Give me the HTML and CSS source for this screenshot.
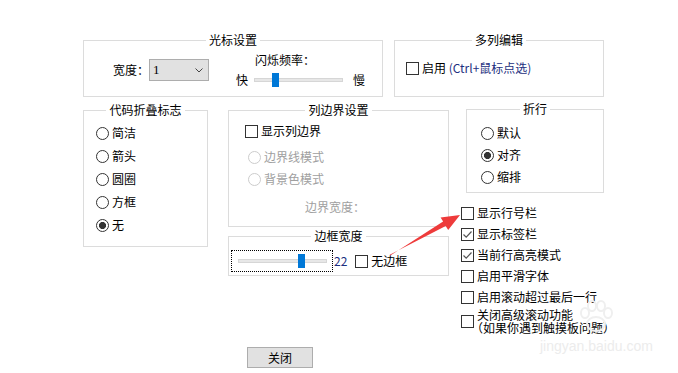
FILE: index.html
```html
<html lang="zh-CN">
<head>
  <meta charset="UTF-8" />
  <title>设置</title>
  <link rel="stylesheet" href="styles.css">
</head>
<body>
  <div class="dialog">
    <div class="row-top">
      <fieldset class="group cursor-group">
        <legend class="group-title">光标设置</legend>
        <div class="cursor-body">
          <div class="width-field">
            <span>宽度：</span>
            <div class="select">
              <span class="select-value">1</span>
              <svg class="chevron" width="8" height="5" viewBox="0 0 8 5"><path d="M0.5 0.5 L4 4 L7.5 0.5" fill="none" stroke="#444" stroke-width="1"/></svg>
            </div>
          </div>
          <div class="blink">
            <div class="blink-title">闪烁频率：</div>
            <div class="blink-row">
              <span>快</span>
              <div class="slider">
                <div class="track"></div>
                <div class="thumb blink-thumb"></div>
              </div>
              <span>慢</span>
            </div>
          </div>
        </div>
      </fieldset>

      <fieldset class="group multi-group">
        <legend class="group-title">多列编辑</legend>
        <div class="multi-body">
          <label class="check-row">
            <span class="checkbox"></span>
            <span>启用 <span class="accent">(Ctrl+鼠标点选)</span></span>
          </label>
        </div>
      </fieldset>
    </div>

    <div class="row-main">
      <fieldset class="group fold-group">
        <legend class="group-title">代码折叠标志</legend>
        <div class="radio-list fold-list">
          <label class="radio-row"><span class="radio"></span>简洁</label>
          <label class="radio-row"><span class="radio"></span>箭头</label>
          <label class="radio-row"><span class="radio"></span>圆圈</label>
          <label class="radio-row"><span class="radio"></span>方框</label>
          <label class="radio-row"><span class="radio on"></span>无</label>
        </div>
      </fieldset>

      <div class="column">
        <fieldset class="group edge-group">
          <legend class="group-title">列边界设置</legend>
          <div class="edge-body">
            <label class="check-row">
              <span class="checkbox"></span>
              <span>显示列边界</span>
            </label>
            <label class="radio-row disabled first-mode"><span class="radio"></span>边界线模式</label>
            <label class="radio-row disabled second-mode"><span class="radio"></span>背景色模式</label>
            <div class="edge-width disabled">边界宽度：</div>
          </div>
        </fieldset>

        <fieldset class="group frame-group">
          <legend class="group-title">边框宽度</legend>
          <div class="frame-body">
            <div class="focus-box">
              <div class="slider">
                <div class="track"></div>
                <div class="thumb frame-thumb"></div>
              </div>
            </div>
            <span class="value">22</span>
            <label class="check-row">
              <span class="checkbox"></span>
              <span>无边框</span>
            </label>
          </div>
        </fieldset>
      </div>

      <div class="side">
        <fieldset class="group wrap-group">
          <legend class="group-title">折行</legend>
          <div class="radio-list wrap-list">
            <label class="radio-row"><span class="radio"></span>默认</label>
            <label class="radio-row"><span class="radio on"></span>对齐</label>
            <label class="radio-row"><span class="radio"></span>缩排</label>
          </div>
        </fieldset>

        <div class="check-list">
          <label class="check-row"><span class="checkbox"></span><span>显示行号栏</span></label>
          <label class="check-row"><span class="checkbox checked"><svg width="11" height="11" viewBox="0 0 11 11"><path d="M1.5 5.5 L4.2 8.2 L9.5 2.5" fill="none" stroke="#555" stroke-width="1.2"/></svg></span><span>显示标签栏</span></label>
          <label class="check-row"><span class="checkbox checked"><svg width="11" height="11" viewBox="0 0 11 11"><path d="M1.5 5.5 L4.2 8.2 L9.5 2.5" fill="none" stroke="#555" stroke-width="1.2"/></svg></span><span>当前行高亮模式</span></label>
          <label class="check-row"><span class="checkbox"></span><span>启用平滑字体</span></label>
          <label class="check-row"><span class="checkbox"></span><span>启用滚动超过最后一行</span></label>
          <label class="check-row multi">
            <span class="checkbox"></span>
            <span class="two-lines">
              <span class="line">关闭高级滚动功能</span>
              <span class="line line-note">（如果你遇到触摸板问题）</span>
            </span>
          </label>
        </div>
      </div>
    </div>

    <div class="actions">
      <button class="btn">关闭</button>
    </div>

    <div class="watermark">
      <svg width="40" height="34" viewBox="0 0 40 34">
        <ellipse cx="20" cy="24" rx="9" ry="7" fill="none" stroke="#efefef" stroke-width="2"/>
        <ellipse cx="9" cy="13" rx="4" ry="5" fill="none" stroke="#efefef" stroke-width="2"/>
        <ellipse cx="16" cy="6" rx="4" ry="5" fill="none" stroke="#efefef" stroke-width="2"/>
        <ellipse cx="25" cy="6" rx="4" ry="5" fill="none" stroke="#efefef" stroke-width="2"/>
        <ellipse cx="32" cy="13" rx="4" ry="5" fill="none" stroke="#efefef" stroke-width="2"/>
      </svg>
      <span class="watermark-text">jingyan.baidu.com</span>
    </div>

    <svg class="arrow" width="678" height="373" viewBox="0 0 678 373">
      <polygon points="390.3,255.6 443.1,221.6 440.6,217.6 460,215 448.2,230 445.7,225.9 389.7,254.8" fill="#ee3b3b"/>
    </svg>
  </div>
</body>
</html>
```

FILE: styles.css
```css
* {
  box-sizing: border-box;
}

body {
  margin: 0;
  font-family: "Noto Sans CJK SC", "Microsoft YaHei", sans-serif;
  font-size: 12px;
  line-height: 16px;
  color: #000;
  background: #fff;
}

.dialog {
  position: relative;
  width: 678px;
  height: 373px;
  padding: 32px 0 0 83px;
  overflow: hidden;
}

.group {
  margin: 0;
  padding: 0;
  border: 1px solid #dcdcdc;
  min-inline-size: 0;
}

.group-title {
  margin: 0 auto;
  padding: 0 3px;
  line-height: 16px;
}

/* top row */

.row-top {
  display: flex;
  gap: 11px;
  height: 65px;
}

.cursor-group {
  width: 300px;
  height: 65px;
}

.multi-group {
  width: 210px;
  height: 65px;
}

.cursor-body {
  display: flex;
  align-items: center;
  padding: 4px 0 0 29px;
}

.width-field {
  display: flex;
  align-items: center;
}

.select {
  width: 60px;
  height: 22px;
  border: 1px solid #adadad;
  background: #e1e1e1;
  display: flex;
  align-items: center;
  justify-content: space-between;
  padding: 0 5px 0 3px;
}

.select-value {
  font-family: "Liberation Serif", serif;
  font-size: 13px;
}

.blink {
  margin-left: 27px;
}

.blink-title {
  margin-left: 19px;
}

.blink-row {
  display: flex;
  align-items: center;
  margin-top: 4px;
}

.slider {
  position: relative;
  width: 89px;
  height: 16px;
  display: flex;
  align-items: center;
}

.blink-row .slider {
  margin: 0 10px 0 6px;
}

.track {
  width: 100%;
  height: 4px;
  background: #e7e7e7;
  border: 1px solid #d6d6d6;
}

.thumb {
  position: absolute;
  top: 1px;
  width: 7px;
  height: 14px;
  background: #0078d7;
}

.blink-thumb {
  left: 18px;
}

.frame-thumb {
  left: 60px;
}

.multi-body {
  padding: 12px 0 0 11px;
}

.accent {
  color: #1c2f80;
}

/* controls */

.check-row,
.radio-row {
  display: flex;
  align-items: center;
  gap: 3px;
}

.checkbox {
  width: 13px;
  height: 13px;
  border: 1px solid #333;
  background: #fff;
  flex: none;
  display: flex;
  align-items: center;
  justify-content: center;
}

.radio {
  width: 13px;
  height: 13px;
  border: 1px solid #333;
  border-radius: 50%;
  background: #fff;
  flex: none;
}

.radio.on {
  background: radial-gradient(circle, #333 0 3.3px, #fff 3.8px);
}

.disabled {
  color: #a0a0a0;
}

.disabled .radio {
  border-color: #cccccc;
}

/* main row */

.row-main {
  display: flex;
  margin-top: 5px;
  height: 232px;
}

.fold-group {
  width: 125px;
  height: 145px;
  margin-right: 20px;
}

.radio-list {
  display: flex;
  flex-direction: column;
}

.fold-list {
  padding: 7px 0 0 12px;
  gap: 7px;
}

.column {
  width: 221px;
  display: flex;
  flex-direction: column;
  gap: 1px;
}

.edge-group {
  height: 125px;
}

.edge-body {
  padding: 5px 0 0 16px;
}

.first-mode {
  margin: 10px 0 0 3px;
}

.second-mode {
  margin: 6px 0 0 3px;
}

.edge-width {
  margin: 12px 0 0 60px;
}

.frame-group {
  height: 48px;
}

.frame-body {
  display: flex;
  align-items: center;
  padding: 6px 0 0 2px;
}

.focus-box {
  width: 102px;
  height: 22px;
  border: 1px dotted #000;
  padding-left: 6px;
  display: flex;
  align-items: center;
}

.value {
  margin: 0 8px 0 1px;
  color: #1c2f80;
}

.side {
  margin-left: 12px;
  display: flex;
  flex-direction: column;
}

.wrap-group {
  width: 138px;
  height: 92px;
  margin: -1px 0 0 5px;
}

.wrap-list {
  padding: 8px 0 0 14px;
  gap: 6px;
}

.check-list {
  display: flex;
  flex-direction: column;
  gap: 5px;
  margin-top: 12px;
}

.check-row.multi {
  margin-top: -1px;
}

.two-lines {
  display: flex;
  flex-direction: column;
}

.line {
  display: block;
  height: 12.5px;
  line-height: 12px;
  white-space: nowrap;
}

.line-note {
  margin-left: -6px;
}

/* footer */

.actions {
  margin: 13px 0 0 164px;
}

.btn {
  width: 66px;
  height: 21px;
  border: 1px solid #adadad;
  background: #e1e1e1;
  font: inherit;
  padding: 0;
}

/* overlays */

.watermark {
  position: absolute;
  left: 540px;
  top: 300px;
  display: flex;
  flex-direction: column;
  align-items: center;
  pointer-events: none;
}

.watermark-text {
  font-family: "Liberation Sans", sans-serif;
  font-size: 14px;
  color: #ececec;
  margin-top: 4px;
}

.arrow {
  position: absolute;
  left: 0;
  top: 0;
  pointer-events: none;
}
```
